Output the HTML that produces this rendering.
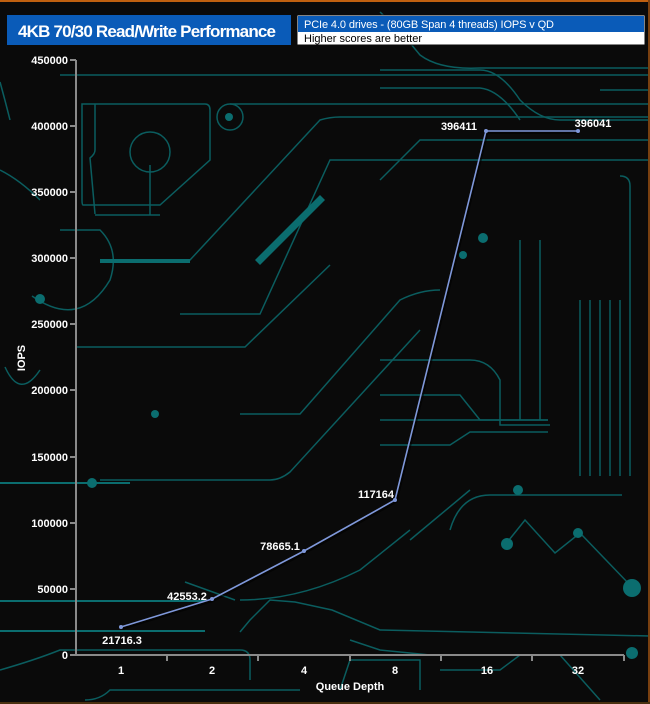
<!DOCTYPE html>
<html><head><meta charset="utf-8"><style>
html,body{margin:0;padding:0;background:#0a0a0a;}
svg{display:block}
text{font-family:"Liberation Sans",Arial,sans-serif;}
</style></head><body>
<svg width="650" height="704" viewBox="0 0 650 704" xmlns="http://www.w3.org/2000/svg">
<rect width="650" height="704" fill="#0a0a0a"/>
<g fill="none" stroke="#0b5d5f" stroke-width="1.5">
<!-- circuit traces -->
<path d="M60 75 H650"/>
<path d="M82 104 H205 Q210 104 210 110 V160 L160 205 H83 Q82 205 82 200 Z"/>
<path d="M95 104 V130 L95 150 Q95 154 90 158 L95 214"/>
<circle cx="150" cy="152" r="20"/>
<path d="M150 165 V215 M95 215 H160"/>
<circle cx="230" cy="117" r="13"/>
<path d="M230 104 H650"/>
<path d="M100 260 H190 L320 120 Q330 117 340 117 H650"/>
<path d="M180 314 H260 L330 160 Q340 160 360 160 H650"/>
<path d="M380 180 L420 140 H650" />
<path d="M0 82 Q5 100 10 120" />
<path d="M0 170 Q20 180 40 200"/>
<path d="M32 296 Q80 330 110 280 Q120 250 100 230 H60"/>
<path d="M75 347 H245 L330 265"/>
<path d="M240 414 H300 L400 300 Q420 290 440 290"/>
<path d="M100 480 H270 Q280 480 290 472 L420 330"/>
<path d="M5 367 Q20 400 40 370"/>
<path d="M380 12 Q400 30 420 55 Q440 70 480 68 H650"/>
<path d="M380 70 H480 Q500 70 520 100 Q540 120 560 120 H650"/>
<path d="M380 88 H480 Q500 90 520 120"/>
<path d="M600 90 H650"/>
<path d="M380 360 H470 Q490 360 500 380 V425 H550"/>
<path d="M380 395 H460 L480 420 H548"/>
<path d="M380 445 H450 L470 432 H548"/>
<path d="M380 420 H548"/>
<path d="M520 240 V420 M540 240 V420"/>
<path d="M580 300 V476 M590 300 V476 M600 300 V476 M610 300 V476 M620 300 V476"/>
<path d="M620 176 Q630 176 630 186 V476"/>
<path d="M450 530 Q460 495 490 495 H622"/>
<path d="M410 540 L470 490"/>
<path d="M505 545 L525 520 L555 553 L580 533 L630 585"/>
<path d="M240 632 L250 620 L270 600 L295 602 L332 610 L380 630 L650 636"/>
<path d="M0 670 Q35 660 60 650 H240 Q250 650 250 660 V680"/>
<path d="M85 700 Q100 700 110 690 H300"/>
<path d="M340 690 L350 660 H420 V690"/>
<path d="M440 670 H500 L520 655 H560 L600 700"/>
<path d="M240 600 Q300 600 360 570 L410 530"/>
<path d="M235 600 L185 582"/>
<path d="M350 640 L380 650 L430 655"/>
</g>
<g fill="#0b6d6f">
<rect x="100" y="259" width="90" height="4"/>
<path d="M255 260 L320 195 L325 200 L260 265 Z"/>
<circle cx="229" cy="117" r="4"/>
<circle cx="40" cy="299" r="5"/>
<circle cx="155" cy="414" r="4"/>
<circle cx="483" cy="238" r="5"/>
<circle cx="463" cy="255" r="4"/>
<circle cx="518" cy="490" r="5"/>
<circle cx="507" cy="544" r="6"/>
<circle cx="578" cy="533" r="5"/>
<circle cx="632" cy="588" r="9"/>
<circle cx="632" cy="653" r="6"/>
<circle cx="92" cy="483" r="5"/>
<rect x="0" y="482" width="130" height="2"/>
<rect x="0" y="600" width="205" height="2"/>
<rect x="0" y="630" width="205" height="2"/>
</g>
<!-- borders -->
<rect x="0" y="0" width="650" height="2" fill="#c06010"/>
<rect x="648" y="0" width="2" height="704" fill="#7a4010"/>
<rect x="0" y="702" width="650" height="2" fill="#4a3010"/>
<!-- title -->
<rect x="7" y="15" width="284" height="30" fill="#0a5bb8"/>
<text x="18" y="37" font-size="17" font-weight="bold" fill="#fff" textLength="258">4KB 70/30 Read/Write Performance</text>
<rect x="297" y="15" width="348" height="30" fill="#fff" stroke="#0a0a0a"/>
<rect x="298" y="16" width="346" height="16" fill="#0a5bb8"/>
<text x="304" y="28" font-size="11" fill="#fff" textLength="250">PCIe 4.0 drives - (80GB Span 4 threads) IOPS v QD</text>
<text x="304" y="42" font-size="11" fill="#000">Higher scores are better</text>
<!-- axes -->
<g stroke="#8a8a8a" stroke-width="2">
<line x1="76" y1="60" x2="76" y2="656"/>
<line x1="75" y1="655" x2="624" y2="655"/>
<line x1="70" y1="60" x2="76" y2="60"/><line x1="70" y1="126" x2="76" y2="126"/>
<line x1="70" y1="192" x2="76" y2="192"/><line x1="70" y1="258" x2="76" y2="258"/>
<line x1="70" y1="324" x2="76" y2="324"/><line x1="70" y1="390" x2="76" y2="390"/>
<line x1="70" y1="457" x2="76" y2="457"/><line x1="70" y1="523" x2="76" y2="523"/>
<line x1="70" y1="589" x2="76" y2="589"/><line x1="70" y1="655" x2="76" y2="655"/>
<line x1="167" y1="655" x2="167" y2="661"/><line x1="258" y1="655" x2="258" y2="661"/>
<line x1="350" y1="655" x2="350" y2="661"/><line x1="441" y1="655" x2="441" y2="661"/>
<line x1="532" y1="655" x2="532" y2="661"/><line x1="624" y1="655" x2="624" y2="661"/>
</g>
<g font-size="11" font-weight="bold" fill="#fff" text-anchor="end">
<text x="68" y="64">450000</text><text x="68" y="130">400000</text>
<text x="68" y="196">350000</text><text x="68" y="262">300000</text>
<text x="68" y="328">250000</text><text x="68" y="394">200000</text>
<text x="68" y="461">150000</text><text x="68" y="527">100000</text>
<text x="68" y="593">50000</text><text x="68" y="659">0</text>
</g>
<g font-size="11" font-weight="bold" fill="#fff" text-anchor="middle">
<text x="121" y="674">1</text><text x="212" y="674">2</text><text x="304" y="674">4</text>
<text x="395" y="674">8</text><text x="487" y="674">16</text><text x="578" y="674">32</text>
<text x="350" y="690">Queue Depth</text>
</g>
<text transform="translate(25,358) rotate(-90)" font-size="11" font-weight="bold" fill="#fff" text-anchor="middle">IOPS</text>
<!-- line -->
<polyline points="121,627 212,599 304,551 395,500 486,131 578,131" fill="none" stroke="#000" stroke-width="3" opacity="0.6" transform="translate(1,1.5)"/>
<polyline points="121,627 212,599 304,551 395,500 486,131 578,131" fill="none" stroke="#7f98da" stroke-width="1.6"/>
<g fill="#7f98da">
<circle cx="121" cy="627" r="2"/><circle cx="212" cy="599" r="2"/><circle cx="304" cy="551" r="2"/>
<circle cx="395" cy="500" r="2"/><circle cx="486" cy="131" r="2"/><circle cx="578" cy="131" r="2"/>
</g>
<g font-size="11" font-weight="bold" fill="#fff" text-anchor="middle">
<text x="122" y="644">21716.3</text>
<text x="187" y="600">42553.2</text>
<text x="280" y="550">78665.1</text>
<text x="376" y="498">117164</text>
<text x="459" y="130">396411</text>
<text x="593" y="127">396041</text>
</g>
</svg>
</body></html>
